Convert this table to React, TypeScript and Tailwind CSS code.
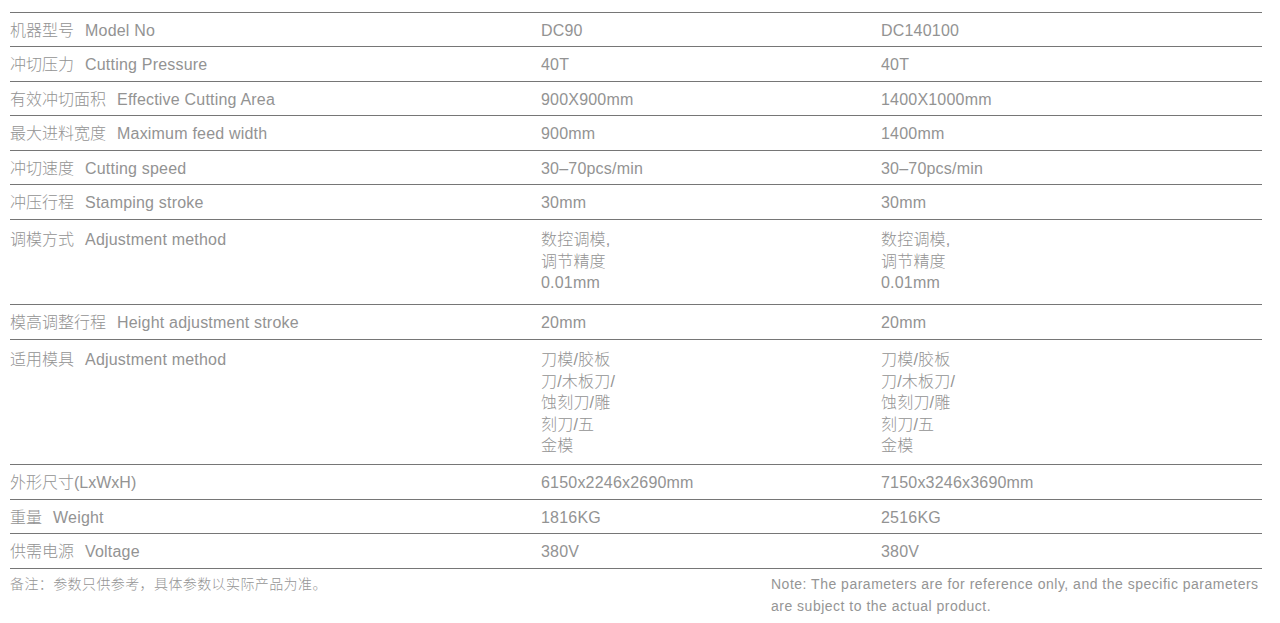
import React from "react";

type Row = { zh: string; en?: string; a: string[]; b: string[] };

const rows: Row[] = [
  { zh: "机器型号", en: "Model No", a: ["DC90"], b: ["DC140100"] },
  { zh: "冲切压力", en: "Cutting Pressure", a: ["40T"], b: ["40T"] },
  { zh: "有效冲切面积", en: "Effective Cutting Area", a: ["900X900mm"], b: ["1400X1000mm"] },
  { zh: "最大进料宽度", en: "Maximum feed width", a: ["900mm"], b: ["1400mm"] },
  { zh: "冲切速度", en: "Cutting speed", a: ["30–70pcs/min"], b: ["30–70pcs/min"] },
  { zh: "冲压行程", en: "Stamping stroke", a: ["30mm"], b: ["30mm"] },
  {
    zh: "调模方式",
    en: "Adjustment method",
    a: ["数控调模,", "调节精度", "0.01mm"],
    b: ["数控调模,", "调节精度", "0.01mm"],
  },
  { zh: "模高调整行程", en: "Height adjustment stroke", a: ["20mm"], b: ["20mm"] },
  {
    zh: "适用模具",
    en: "Adjustment method",
    a: ["刀模/胶板", "刀/木板刀/", "蚀刻刀/雕", "刻刀/五", "金模"],
    b: ["刀模/胶板", "刀/木板刀/", "蚀刻刀/雕", "刻刀/五", "金模"],
  },
  { zh: "外形尺寸(LxWxH)", a: ["6150x2246x2690mm"], b: ["7150x3246x3690mm"] },
  { zh: "重量", en: "Weight", a: ["1816KG"], b: ["2516KG"] },
  { zh: "供需电源", en: "Voltage", a: ["380V"], b: ["380V"] },
];

const font = {
  fontFamily: '"Liberation Sans", "Noto Sans CJK SC", sans-serif',
};

function Cell({ lines }: { lines: string[] }) {
  return (
    <div className="flex flex-col">
      {lines.map((l, i) => (
        <div key={i} className="whitespace-nowrap">
          {l}
        </div>
      ))}
    </div>
  );
}

export default function App() {
  return (
    <div className="w-[1280px] h-[623px] bg-white overflow-hidden" style={font}>
      <div className="pt-[12px] pl-[10px] w-[1262px]">
        <div className="border-t border-[#767676]">
          {rows.map((r, i) => {
            const n = r.a.length;
            const h = n === 1 ? (i % 2 === 0 ? "h-[34px]" : "h-[35px]") : n === 3 ? "h-[85px]" : "h-[125px]";
            const pt = n === 1 ? "pt-[7px]" : "pt-[9px]";
            return (
              <div
                key={i}
                className={`grid grid-cols-[531px_340px_1fr] border-b border-[#767676] text-[16px] leading-[21.5px] tracking-[0.2px] text-[#939393] font-light ${h} ${pt}`}
              >
                <div className="whitespace-nowrap">
                  <span className="tracking-normal">{r.zh}</span>
                  {r.en && <span className="ml-[11px]">{r.en}</span>}
                </div>
                <Cell lines={r.a} />
                <Cell lines={r.b} />
              </div>
            );
          })}
        </div>
        <div className="flex justify-between pt-[4px] text-[14px] leading-[22px] text-[#959595] font-light">
          <div className="whitespace-nowrap tracking-[0.4px]">备注：参数只供参考，具体参数以实际产品为准。</div>
          <div className="w-[491px] whitespace-nowrap tracking-[0.5px]">
            Note: The parameters are for reference only, and the specific parameters
            <br />
            are subject to the actual product.
          </div>
        </div>
      </div>
    </div>
  );
}
